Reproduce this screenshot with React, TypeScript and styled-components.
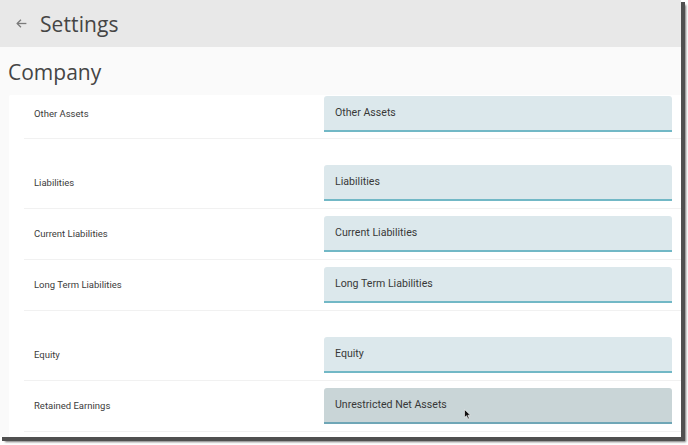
import React from 'react'
import styled, { createGlobalStyle } from 'styled-components'

type Field = {
  label: string
  value: string
  section?: boolean
  hovered?: boolean
}

const fields: Array<Field> = [
  { label: 'Other Assets', value: 'Other Assets' },
  { label: 'Liabilities', value: 'Liabilities', section: true },
  { label: 'Current Liabilities', value: 'Current Liabilities' },
  { label: 'Long Term Liabilities', value: 'Long Term Liabilities' },
  { label: 'Equity', value: 'Equity', section: true },
  { label: 'Retained Earnings', value: 'Unrestricted Net Assets', hovered: true }
]

const GlobalStyle = createGlobalStyle`
  html, body {
    margin: 0;
    padding: 0;
    background: #ffffff;
  }
`

const Page = styled.div`
  width: 688px;
  height: 445px;
  background: #ffffff;
`

const Frame = styled.div`
  width: 681px;
  height: 437px;
  display: flex;
  flex-direction: column;
  overflow: hidden;
  background: #fafafa;
  box-shadow: 3px 3px 0 1px #505050, 5px 5px 2px 0 rgba(70, 70, 70, 0.75);
`

const Header = styled.header`
  height: 47px;
  flex: none;
  display: flex;
  align-items: center;
  gap: 12px;
  padding-left: 15px;
  background: #e8e8e8;
  color: #7a7a7a;
`

const Title = styled.h1`
  margin: 0;
  font-family: 'Open Sans', sans-serif;
  font-weight: 400;
  font-size: 21px;
  color: #454545;
  letter-spacing: 0.1px;
`

const PageTitle = styled.h2`
  margin: 0;
  height: 48px;
  flex: none;
  display: flex;
  align-items: center;
  padding: 2px 0 0 8px;
  box-sizing: border-box;
  font-family: 'Open Sans', sans-serif;
  font-weight: 400;
  font-size: 21px;
  color: #454545;
`

const Card = styled.div`
  flex: 1;
  margin-left: 9px;
  padding-left: 15px;
  background: #ffffff;
  border-top-left-radius: 2px;
`

const Row = styled.div<{ $section?: boolean; $first?: boolean }>`
  display: grid;
  grid-template-columns: 300px 348px;
  align-items: center;
  padding: ${({ $first, $section }) => ($first ? '1px' : $section ? '26px' : '7px')} 8px
    ${({ $first }) => ($first ? '6px' : '7px')} 0;
  border-bottom: 1px solid #f1f1f1;
`

const Label = styled.span`
  padding: 0 0 1px 10px;
  font-family: Roboto, sans-serif;
  font-size: 9.5px;
  color: #3c3c3c;
`

const Input = styled.div<{ $hovered?: boolean }>`
  position: relative;
  height: 36px;
  box-sizing: border-box;
  display: flex;
  align-items: center;
  padding: 0 0 1px 11px;
  border-radius: 3px 3px 0 0;
  border-bottom: 2px solid ${({ $hovered }) => ($hovered ? '#6fa6b6' : '#72b8c6')};
  background: ${({ $hovered }) => ($hovered ? '#c9d5d7' : '#dce8ec')};
  font-family: Roboto, sans-serif;
  font-size: 10.6px;
  color: #383838;
`

const Pointer = styled.svg`
  position: absolute;
  left: 140px;
  top: 21px;
`

const BackArrow = () => (
  <svg width='13' height='13' viewBox='0 0 24 24' fill='none' stroke='currentColor' strokeWidth='2.4'>
    <path d='M21 12H4' />
    <path d='M11 5l-7 7 7 7' />
  </svg>
)

const App = (): JSX.Element => {
  return (
    <Page>
      <GlobalStyle />
      <Frame>
        <Header>
          <BackArrow />
          <Title>Settings</Title>
        </Header>
        <PageTitle>Company</PageTitle>
        <Card>
          {fields.map(({ label, value, section, hovered }, index) => (
            <Row key={`field-${index}`} $section={section} $first={index === 0}>
              <Label>{label}</Label>
              <Input $hovered={hovered}>
                {value}
                {hovered && (
                  <Pointer width='7' height='11' viewBox='0 0 7 11'>
                    <path d='M0.5 0.5 L0.5 8.5 L2.5 6.7 L4 10 L5.3 9.4 L3.9 6.2 L6.5 6.2 Z' fill='#111' stroke='#fff' strokeWidth='0.6' />
                  </Pointer>
                )}
              </Input>
            </Row>
          ))}
        </Card>
      </Frame>
    </Page>
  )
}

export default App
